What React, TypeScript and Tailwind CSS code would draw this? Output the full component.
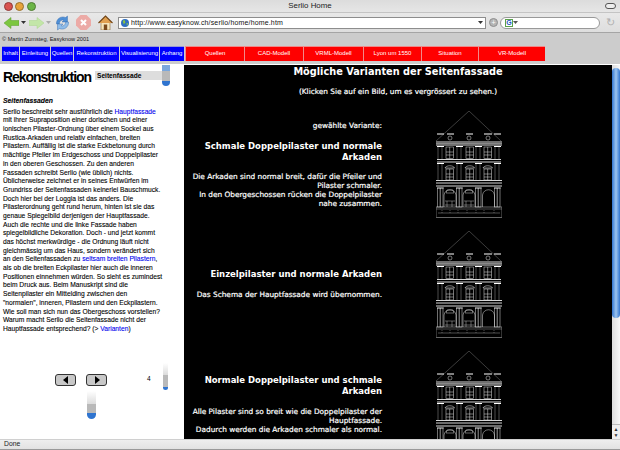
const Facade = () => {
  const pil = [2, 21, 40, 59];
  const win = [10, 30, 48];
  return (
    <svg viewBox="0 0 66 107" className="w-[66px] h-[107px] shrink-0 ml-[54px] mt-[2px]" fill="none" stroke="#e4e4e4" strokeWidth="0.5">
      <path d="M0 30 L33 0 L65 30" stroke="#777" strokeWidth="0.5" />
      <path d="M1 23h7M11 23h7M30 23h7M48 23h8M58 23h7" stroke="#fff" strokeWidth="1" />
      {[14, 33, 52].map((x) => <circle key={x} cx={x} cy="27" r="2" />)}
      <path d="M0 31h66M0 34h66" stroke="#ddd" strokeWidth="1.2" />
      <path d="M0 32.500h66" stroke="#888" strokeWidth="1" />
      <path d="M1 48.500h64M1 51h64M0 69.500h66M0 72h66M0 75h66" stroke="#eee" strokeWidth="0.9" />
      {pil.map((x) => (
        <g key={x}>
          <path d={`M${x - 1} 35.500h7M${x - 1} 52.500h7`} stroke="#fff" strokeWidth="1.2" />
          <path d={`M${x} 36v12M${x + 4} 36v12M${x} 53v16M${x + 4} 53v16`} stroke="#999" />
          <rect x={x - 0.500} y="77" width="5.500" height="19" stroke="#ddd" />
          <path d={`M${x - 1} 77h7M${x + 2.200} 77v19`} stroke="#fff" strokeWidth="0.6" />
        </g>
      ))}
      {win.map((x) => (
        <g key={x}>
          <rect x={x} y="36" width="7.500" height="11.500" />
          <path d={`M${x + 3.700} 36v11.500M${x} 41h7.500M${x} 44h7.500`} />
          <path d={`M${x - 1} 57c1-3 8.500-3 9.500 0z`} stroke="#fff" />
          <rect x={x} y="58" width="7.500" height="11" />
          <path d={`M${x + 3.700} 58v11M${x} 63h7.500M${x} 66h7.500`} />
        </g>
      ))}
      <path d="M8 96V84c1-7 11-7 12 0v12M27 96V84c1-7 11-7 12 0v12M46.500 96V84c1-7 11-7 12 0v12" />
      <path d="M10 82h8l-1-3h-6zM29 82h8l-1-3h-6z" stroke="#ccc" />
      <path d="M9 90h10M28 90h10M9 94h10M28 94h10M11 90v6M16 90v6M30 90v6M35 90v6" stroke="#bbb" />
      <rect x="0" y="96" width="66" height="10.500" stroke="#ccc" />
      <path d="M0 98h66M2 102h62" stroke="#999" />
      <path d="M6 99v3M14 99v3M22 99v3M31 99v3M40 99v3M48 99v3M58 99v3" stroke="#999" strokeDasharray="1 1" />
    </svg>
  );
};

const Caret = ({ color }: { color: string }) => (
  <svg width="5" height="3" viewBox="0 0 5 3"><path d="M0 0h5L2.500 3z" fill={color} /></svg>
);

export default function App() {
  const left: [string, string][] = [
    ["Inhalt", "w-[17px]"], ["Einleitung", "w-[30px]"], ["Quellen", "w-[22px]"],
    ["Rekonstruktion", "w-[45px]"], ["Visualisierung", "w-[39px]"], ["Anhang", "w-[24px]"],
  ];
  const right: [string, string][] = [
    ["Quellen", "w-[59px]"], ["CAD-Modell", "w-[59px]"], ["VRML-Modell", "w-[60px]"],
    ["Lyon um 1550", "w-[58px]"], ["Situation", "w-[57px]"], ["VR-Modell", "w-[67px]"],
  ];
  const para = [
    "Serlio beschreibt sehr ausführlich die |Hauptfassade|",
    "mit ihrer Supraposition einer dorischen und einer",
    "ionischen Pilaster-Ordnung über einem Sockel aus",
    "Rustica-Arkaden und relativ einfachen, breiten",
    "Pilastern. Auffällig ist die starke Eckbetonung durch",
    "mächtige Pfeiler im Erdgeschoss und Doppelpilaster",
    "in den oberen Geschossen. Zu den anderen",
    "Fassaden schreibt Serlio (wie üblich) nichts.",
    "Üblicherweise zeichnet er in seines Entwürfen im",
    "Grundriss der Seitenfassaden keinerlei Bauschmuck.",
    "Doch hier bei der Loggia ist das anders. Die",
    "Pilasterordnung geht rund herum, hinten ist sie das",
    "genaue Spiegelbild derjenigen der Hauptfassade.",
    "Auch die rechte und die linke Fassade haben",
    "spiegelbildliche Dekoration. Doch - und jetzt kommt",
    "das höchst merkwürdige - die Ordnung läuft nicht",
    "gleichmässig um das Haus, sondern verändert sich",
    "an den Seitenfassaden zu |seltsam breiten Pilastern|,",
    "als ob die breiten Eckpilaster hier auch die inneren",
    "Positionen einnehmen würden. So sieht es zumindest",
    "beim Druck aus. Beim Manuskript sind die",
    "Seitenpilaster ein Mittelding zwischen den",
    "\"normalen\", inneren, Pilastern und den Eckpilastern.",
    "Wie soll man sich nun das Obergeschoss vorstellen?",
    "Warum macht Serlio die Seitenfassade nicht der",
    "Hauptfassade entsprechend? (> |Varianten|)",
  ];
  return (
    <div className="w-[620px] h-[450px] overflow-hidden flex flex-col bg-white font-['Liberation_Sans',Arial,sans-serif] text-black">
      {/* Browser title bar */}
      <div className="h-[12px] shrink-0 flex items-center justify-between bg-gradient-to-b from-[#dcdcdc] to-[#e6e6e6]">
        <div className="w-[40px] flex gap-[2.500px] pl-[3.500px]">
          <span className="w-[9px] h-[9px] rounded-full bg-[#d9534f] border border-[#8e3a38]" />
          <span className="w-[9px] h-[9px] rounded-full bg-[#e8a33a] border border-[#96702c]" />
          <span className="w-[9px] h-[9px] rounded-full bg-[#6cb546] border border-[#4f7c33]" />
        </div>
        <div className="text-[7.900px] leading-none text-[#222] whitespace-nowrap">Serlio Home</div>
        <div className="w-[40px] flex justify-end pr-[4px]">
          <span className="w-[11px] h-[6px] rounded-full border border-[#555] bg-[#eee]" />
        </div>
      </div>
      {/* Toolbar */}
      <div className="h-[21px] shrink-0 flex items-center pl-[4px] bg-gradient-to-b from-[#e8e8e8] to-[#dedede] border-b border-[#a5a5a5] border-t border-t-[#c4c4c4]">
        <svg width="15" height="12" viewBox="0 0 15 12"><path d="M0 6 7 .5v3h8v5H7v3z" fill="#7cc63f" stroke="#5a9a2c" strokeWidth=".5" /></svg>
        <div className="ml-[2px] mr-[3px] flex"><Caret color="#333" /></div>
        <svg width="15" height="12" viewBox="0 0 15 12"><path d="M15 6 8 .5v3H0v5h8v3z" fill="#c3e6a8" stroke="#aad48c" strokeWidth=".5" /></svg>
        <div className="ml-[2px] mr-[4px] flex"><Caret color="#aaa" /></div>
        <svg width="15" height="16" viewBox="0 0 15 16">
          <path d="M1.500 9C1 4 6 .5 10.500 2.500L12.500 1v6H7l1.800-1.800C6.500 4.500 4.500 6 4.300 9z" fill="#4f8fd6" stroke="#2a62a8" strokeWidth=".4" />
          <path d="M13.500 7C14 12 9 15.500 4.500 13.500L2.500 15V9H8l-1.800 1.800C8.500 11.500 10.500 10 10.700 7z" fill="#8fbce9" stroke="#2a62a8" strokeWidth=".4" />
        </svg>
        <svg width="15" height="15" viewBox="0 0 15 15" className="ml-[6px]">
          <path d="M4.500 0h6L15 4.500v6L10.500 15h-6L0 10.500v-6z" fill="#ecaaa6" />
          <path d="M5 5l5 5M10 5l-5 5" stroke="#fff" strokeWidth="2" />
        </svg>
        <svg width="15" height="15" viewBox="0 0 15 15" className="ml-[7px]">
          <path d="M3 7v8h9V7z" fill="#f6e6bc" stroke="#8d6a32" strokeWidth=".6" />
          <path d="M.5 8 7.500 1l7 7" fill="#e0a050" stroke="#6e4418" strokeWidth="1.100" />
          <rect x="5.800" y="9.500" width="3.400" height="5.500" fill="#7a4a1c" />
        </svg>
        <div className="ml-[5px] w-[368px] h-[12px] shrink-0 bg-white border border-[#8d8d8d] flex items-center justify-between pl-[2px] pr-[2px]">
          <div className="flex items-center">
            <svg width="8" height="8" viewBox="0 0 9 9"><circle cx="4.500" cy="4.500" r="4.500" fill="#2f6fc2" /><path d="M2 2l2-1 1 3-2 2zM6 5l2-.5L7 8z" fill="#8cc63f" /></svg>
            <span className="ml-[2px] text-[7px] leading-none text-[#111] whitespace-nowrap tracking-[0.15px]">http://www.easyknow.ch/serlio/home/home.htm</span>
          </div>
          <Caret color="#333" />
        </div>
        <span className="ml-[3px] w-[9px] h-[9px] shrink-0 rounded-full bg-[#b5b5b5] border border-[#8f8f8f] flex items-center justify-center text-[7px] leading-none text-white">+</span>
        <div className="ml-[2px] w-[100px] h-[12px] shrink-0 rounded-full bg-white border border-[#999] flex items-center pl-[4px]">
          <span className="w-[8px] h-[8px] border border-[#5aa04c] flex items-center justify-center text-[7px] leading-none text-[#2456c2] font-bold">G</span>
          <Caret color="#555" />
        </div>
        <span className="ml-[6px] text-[#b0b0b0] text-[11px] leading-none">↻</span>
      </div>
      {/* Copyright band */}
      <div className="h-[13px] shrink-0 bg-[#cccccc] pl-[2px] flex items-center">
        <span className="text-[5.600px] leading-none text-[#222]">© Martin Zumsteg, Easyknow 2001</span>
      </div>
      {/* Nav */}
      <div className="h-[15px] shrink-0 flex bg-[#cccccc] pl-[2px]">
        {left.map(([t, w]) => (
          <div key={t} className={"bg-[#0000ff] text-white text-[6px] leading-none text-center pt-[3px] mr-[1px] whitespace-nowrap border-t border-[#9a9ad8] " + w}>{t}</div>
        ))}
        {right.map(([t, w]) => (
          <div key={t} className={"bg-[#ff0000] text-white text-[6px] leading-none text-center pt-[3px] border-l border-t border-[#f08a8a] whitespace-nowrap " + w}>{t}</div>
        ))}
      </div>
      <div className="h-[4px] shrink-0 bg-[#cccccc] border-b border-white" />
      {/* Content */}
      <div className="flex flex-1 min-h-0">
        <div className="w-[184px] shrink-0 bg-white flex flex-col">
          <div className="flex h-[24px] shrink-0 items-start pl-[3px]">
            <div className="font-bold text-[14px] leading-[14px] tracking-[-1.05px] w-[92px] mt-[5px] whitespace-nowrap">Rekonstruktion</div>
            <div className="w-[67px] h-[9px] mt-[6px] bg-[#dddddd] text-[6.600px] font-bold leading-[9px] pl-[2px] whitespace-nowrap">Seitenfassade</div>
            <div className="flex flex-col w-[8px]">
              <div className="h-[6px] bg-[#7aa7dd]" />
              <div className="h-[10px] bg-[#b9b9b9]" />
              <div className="h-[5px] rounded-b-full bg-[#2f74cf]" />
            </div>
          </div>
          <div className="pl-[3px] mt-[6.500px] text-[6.700px] leading-[8.680px] whitespace-nowrap text-black [-webkit-text-stroke:0.1px_black]">
            <div className="font-bold italic mb-[3.200px] leading-[9px] text-[6.800px]">Seitenfassaden</div>
            {para.map((l, i) => (
              <div key={i}>
                {l.split("|").map((s, j) => (
                  <span key={j} className={j % 2 ? "text-[#0000ee] [-webkit-text-stroke:0.1px_#0000ee]" : ""}>{s}</span>
                ))}
              </div>
            ))}
          </div>
          <div className="flex items-start mt-[29.500px] h-[27px] shrink-0">
            <div className="flex gap-[10px] ml-[55px] mt-[11px]">
              {["M6 0v8L1 4z", "M2 0v8l5-4z"].map((d) => (
                <div key={d} className="w-[21px] h-[12px] rounded-[3px] border border-[#333] bg-[#c8c8c8] flex items-center justify-center">
                  <svg width="8" height="8" viewBox="0 0 8 8"><path d={d} fill="#000" /></svg>
                </div>
              ))}
            </div>
            <span className="ml-[40px] mt-[13px] w-[4px] text-[6.500px] leading-none">4</span>
            <div className="ml-[12px] w-[5px] flex flex-col">
              <div className="h-[12px] bg-gradient-to-b from-white to-[#dcdcdc]" />
              <div className="h-[12px] bg-[#b9b9b9]" />
              <div className="h-[3px] rounded-b-full bg-[#2f74cf]" />
            </div>
          </div>
          <div className="ml-[87px] mt-[1px] w-[9px] flex flex-col">
            <div className="h-[13px] bg-gradient-to-b from-white to-[#dcdcdc]" />
            <div className="h-[9px] bg-[#b9b9b9]" />
            <div className="h-[6px] rounded-b-full bg-[#2f74cf]" />
          </div>
        </div>
        <div className="flex-1 min-w-0 bg-black text-white font-['DejaVu_Sans',Verdana,sans-serif] overflow-hidden flex flex-col text-[7.350px]">
          <div className="text-center font-bold text-[9.750px] leading-[12px] mt-[1px] whitespace-nowrap shrink-0">Mögliche Varianten der Seitenfassade</div>
          <div className="text-center leading-[10px] mt-[9px] whitespace-nowrap shrink-0 [-webkit-text-stroke:0.2px_white]">(Klicken Sie auf ein Bild, um es vergrössert zu sehen.)</div>
          <div className="flex h-[120px] shrink-0 mt-[12px]">
            <div className="w-[198px] text-right shrink-0 pt-[12px]">
              <div className="leading-[10px] mb-[10px] [-webkit-text-stroke:0.2px_white]">gewählte Variante:</div>
              <div className="font-bold text-[8.500px] leading-[11px] mb-[9px]">Schmale Doppelpilaster und normale Arkaden</div>
              <div className="leading-[9px] whitespace-nowrap [-webkit-text-stroke:0.2px_white]">
                <div>Die Arkaden sind normal breit, dafür die Pfeiler und</div>
                <div>Pilaster schmaler.</div>
                <div>In den Obergeschossen rücken die Doppelpilaster</div>
                <div>nahe zusammen.</div>
              </div>
            </div>
            <Facade />
          </div>
          <div className="flex h-[120px] shrink-0">
            <div className="w-[198px] text-right shrink-0 pt-[40px]">
              <div className="font-bold text-[8.500px] leading-[11px] mb-[10px] whitespace-nowrap">Einzelpilaster und normale Arkaden</div>
              <div className="leading-[9px] whitespace-nowrap [-webkit-text-stroke:0.2px_white]">Das Schema der Hauptfassade wird übernommen.</div>
            </div>
            <Facade />
          </div>
          <div className="flex shrink-0">
            <div className="w-[198px] text-right shrink-0 pt-[25.500px]">
              <div className="font-bold text-[8.500px] leading-[11px] mb-[10px]">Normale Doppelpilaster und schmale Arkaden</div>
              <div className="leading-[9px] whitespace-nowrap [-webkit-text-stroke:0.2px_white]">
                <div>Alle Pilaster sind so breit wie die Doppelpilaster der</div>
                <div>Hauptfassade.</div>
                <div>Dadurch werden die Arkaden schmaler als normal.</div>
              </div>
            </div>
            <Facade />
          </div>
        </div>
        <div className="w-[8px] shrink-0 flex flex-col bg-gradient-to-r from-[#dddddd] to-[#f8f8f8]">
          <div className="h-[250px] mt-[3px] rounded-full bg-gradient-to-r from-[#2f74cf] via-[#9cc4ef] to-[#2f74cf] shrink-0" />
          <div className="flex-1" />
          <div className="h-[15px] shrink-0 bg-[#eeeeee] border-t border-[#bbb] flex flex-col items-center justify-center gap-[1px] text-[5px] leading-none text-[#333]"><span>▲</span><span>▼</span></div>
        </div>
      </div>
      {/* Status bar */}
      <div className="h-[11px] shrink-0 bg-gradient-to-b from-[#eeeeee] to-[#e2e2e2] border-t border-[#d0d0d0] border-b border-b-[#999] pl-[4px] flex items-center">
        <span className="text-[6.800px] leading-none text-[#222]">Done</span>
      </div>
    </div>
  );
}
